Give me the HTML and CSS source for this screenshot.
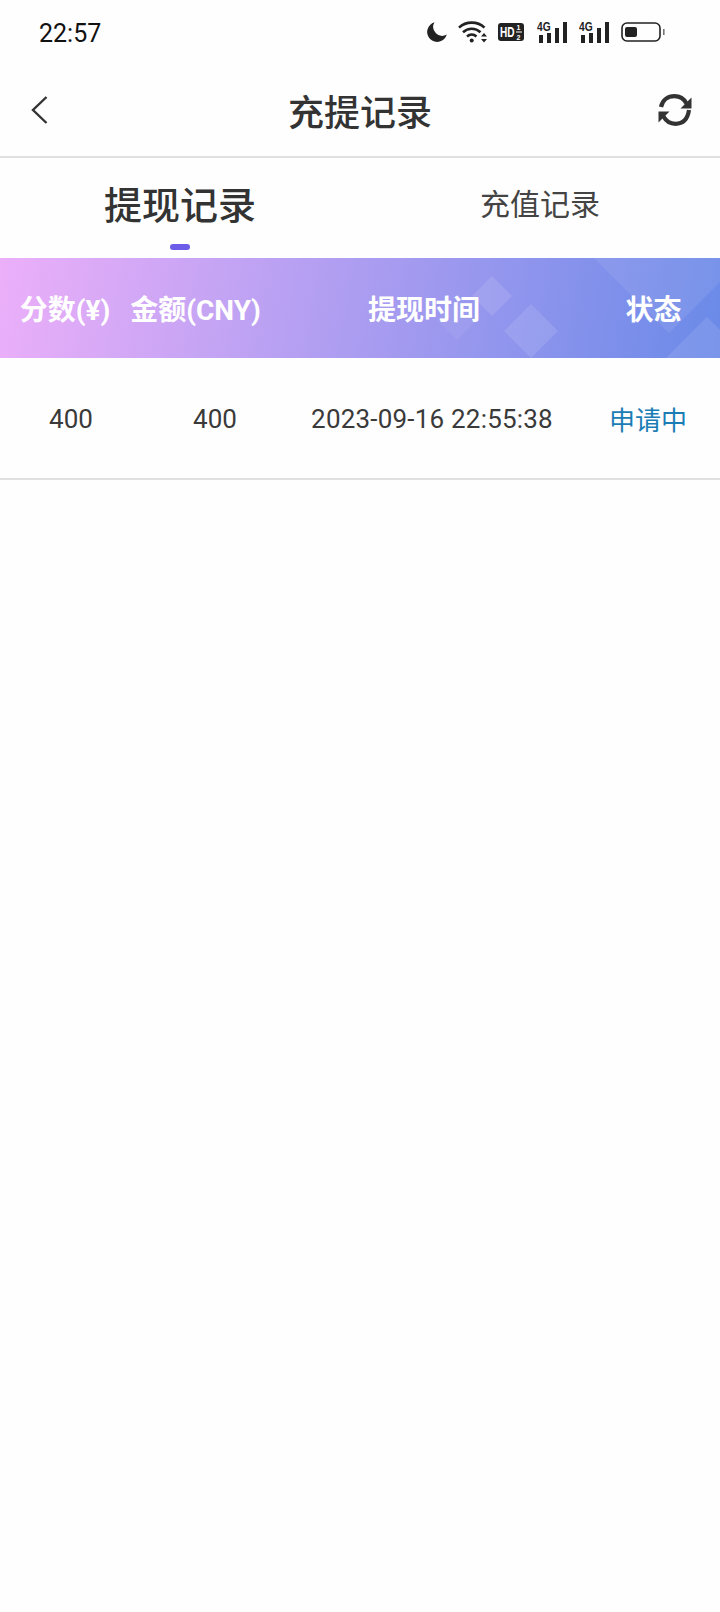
FILE: index.html
```html
<!DOCTYPE html>
<html lang="zh-CN">
<head>
    <meta charset="UTF-8">
    <meta name="viewport" content="width=device-width, initial-scale=1.0">
    <title>充提记录</title>
    <link rel="stylesheet" href="styles.css">
</head>
<body>
    <!-- Status bar -->
    <div class="status-bar">
        <span class="clock">22:57</span>
        <div class="status-icons">
            <svg width="20" height="20" viewBox="0 0 20 20"><path d="M7.5 0.3A10 10 0 1 0 19.8 12.6A9 9 0 0 1 7.5 0.3Z" fill="#222"/></svg>
            <svg width="29" height="22" viewBox="0 0 29 22" fill="none" stroke="#222" stroke-width="2.6">
                <path d="M1 6.6C8 0 19.5 0 26.5 6.6"/>
                <path d="M5 11.2C10 6.6 17.5 6.6 22.5 11.2"/>
                <path d="M9 15.4C11.8 13 15.7 13 18.5 15.4"/>
                <circle cx="13.7" cy="19.5" r="2" fill="#222" stroke="none"/>
                <path d="M23 15.6L26 12L29 15.6ZM23 18L29 18L26 21.6Z" fill="#222" stroke="none"/>
            </svg>
            <svg class="hd-icon" width="28" height="18" viewBox="0 0 28 18">
                <rect width="26" height="18" rx="3" fill="#222"/>
                <text transform="translate(2 14) scale(0.72 1)" class="hd-text">HD</text>
                <text x="18.5" y="7" class="hd-small">1</text>
                <rect x="18" y="8.5" width="6" height="1" fill="#fff"/>
                <text x="18.5" y="17" class="hd-small">2</text>
            </svg>
            <svg width="31" height="22" viewBox="0 0 31 22">
                <text transform="translate(0 10) scale(0.85 1)" class="net-text">4G</text>
                <path d="M2 14h4v8H2ZM10 12h4v10h-4ZM18 7h4v15h-4ZM26 1h4v21h-4Z" fill="#222"/>
            </svg>
            <svg width="31" height="22" viewBox="0 0 31 22">
                <text transform="translate(0 10) scale(0.85 1)" class="net-text">4G</text>
                <path d="M2 14h4v8H2ZM10 12h4v10h-4ZM18 7h4v15h-4ZM26 1h4v21h-4Z" fill="#222"/>
            </svg>
            <svg width="44" height="20" viewBox="0 0 44 20">
                <rect x="1" y="1" width="38" height="18" rx="5" fill="none" stroke="#222" stroke-width="1.6"/>
                <rect x="4" y="5" width="12" height="10" rx="2" fill="#222"/>
                <rect x="42" y="7" width="1.6" height="6" fill="#777"/>
            </svg>
        </div>
    </div>

    <!-- Header -->
    <div class="nav-bar">
        <svg width="17" height="28" viewBox="0 0 17 28" fill="none" stroke="#333" stroke-width="2.4"><path d="M15.5 1L2 14L15.5 27"/></svg>
        <h1>充提记录</h1>
        <svg class="refresh" width="34" height="32" viewBox="0 0 34 32" fill="none" stroke="#333" stroke-width="4.2">
            <path d="M3 13C4.5 6 10 2.2 16.5 2.2C22 2.2 26 5 28.5 9.5"/>
            <path d="M31 16C29.500 26 24 29.800 17.500 29.800C12 29.800 8 27 5.500 22.500"/>
            <path d="M33.500 3.500V14.500H22.500Z" fill="#333" stroke="none"/>
            <path d="M0.500 28.500V17.500H11.500Z" fill="#333" stroke="none"/>
        </svg>
    </div>

    <!-- Tabs -->
    <div class="tabs">
        <div class="tab active">提现记录</div>
        <div class="tab">充值记录</div>
    </div>

    <!-- Table -->
    <div class="table-head">
        <svg class="head-deco" width="720" height="100" viewBox="0 0 720 100" fill="#fff">
            <path d="M492 18L512 38L492 58L472 38Z" fill-opacity="0.11"/>
            <path d="M457 42L477 62L457 82L437 62Z" fill-opacity="0.05"/>
            <path d="M531 46L558 73L531 100L504 73Z" fill-opacity="0.11"/>
            <path d="M594 0L669 75L720 24V0Z" fill-opacity="0.08"/>
            <path d="M707 59L720 72V100H666Z" fill-opacity="0.1"/>
        </svg>
        <div class="head-cell">分数(¥)</div>
        <div class="head-cell">金额(CNY)</div>
        <div class="head-cell">提现时间</div>
        <div class="head-cell">状态</div>
    </div>
    <div class="table-row">
        <div>400</div>
        <div>400</div>
        <div class="time">2023-09-16 22:55:38</div>
        <div class="state">申请中</div>
    </div>
</body>
</html>
```

FILE: styles.css
```css
body {
    margin: 0;
    background-color: #fefefe;
    color: #333;
    font-family: Roboto, "Noto Sans CJK SC", sans-serif;
}

.status-bar {
    display: flex;
    justify-content: space-between;
    align-items: center;
    height: 64px;
    padding: 0 55px 0 39px;
}

.clock {
    margin-top: 2px;
    font-size: 25px;
    color: #111;
}

.status-icons {
    display: flex;
    align-items: center;
    gap: 11px;
}

.hd-text {
    font: bold 14px "Liberation Sans", sans-serif;
    fill: #fff;
}

.hd-small {
    font: bold 7px "Liberation Sans", sans-serif;
    fill: #fff;
}

.net-text {
    font: bold 12px "Liberation Sans", sans-serif;
    fill: #222;
}

.nav-bar {
    display: grid;
    grid-template-columns: 1fr auto 1fr;
    align-items: center;
    height: 92px;
    padding: 0 28px 0 31px;
    border-bottom: 2px solid #e0e0e0;
}

.nav-bar h1 {
    margin: 0 0 0 -3px;
    font-size: 36px;
    font-weight: 500;
}

.refresh {
    justify-self: end;
}

.tabs {
    display: flex;
    height: 100px;
}

.tab {
    flex: 1;
    display: flex;
    justify-content: center;
    align-items: center;
    padding-bottom: 12px;
    color: #444;
    font-size: 30px;
}

.tab.active {
    position: relative;
    color: #333;
    font-size: 38px;
    font-weight: 500;
}

.tab.active::after {
    content: "";
    position: absolute;
    left: 170px;
    bottom: 8px;
    width: 20px;
    height: 6px;
    border-radius: 3px;
    background-color: #6c5ce7;
}

.table-head {
    position: relative;
    display: grid;
    grid-template-columns: 130px 131px 326px 133px;
    align-items: center;
    height: 100px;
    background: linear-gradient(100deg, #ecaff9, #6a8ae8);
    color: #fff;
    font-size: 28px;
    font-weight: 700;
    text-align: center;
}

.head-deco {
    position: absolute;
    left: 0;
    top: 0;
}

.head-cell {
    position: relative;
}

.table-row {
    display: grid;
    grid-template-columns: 142px 146px 288px 144px;
    align-items: center;
    height: 118px;
    padding-top: 2px;
    border-bottom: 2px solid #e0e0e0;
    color: #3a3a3a;
    font-size: 26px;
    text-align: center;
}

.time {
    letter-spacing: 0.2px;
}

.state {
    margin-bottom: 2px;
    color: #1a7db5;
}
```
